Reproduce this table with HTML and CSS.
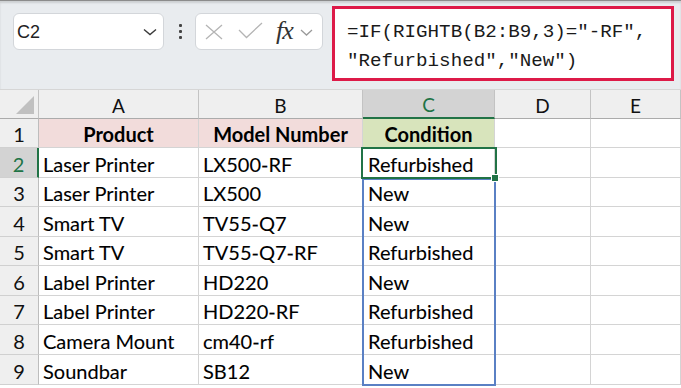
FILE: index.html
```html
<!DOCTYPE html>
<html>
<head>
<meta charset="utf-8">
<link rel="stylesheet" href="styles.css">
</head>
<body>
<div class="toolbar">
  <div class="namebox">
    <span class="name">C2</span>
    <svg class="chev" width="14" height="8" viewBox="0 0 14 8"><path d="M1 1.5 L7 6.5 L13 1.5" fill="none" stroke="#3a3a3a" stroke-width="1.4"/></svg>
  </div>
  <div class="dots"><i></i><i></i><i></i></div>
  <div class="fxbox">
    <svg class="xicon" width="18" height="16" viewBox="0 0 18 16"><path d="M1 1 L17 15 M17 1 L1 15" stroke="#b4b4b4" stroke-width="1.3" fill="none"/></svg>
    <svg class="check" width="25" height="17" viewBox="0 0 25 17"><path d="M1 8 L8.5 15.5 L24 1" stroke="#b4b4b4" stroke-width="1.3" fill="none"/></svg>
    <span class="fx">fx</span>
    <svg class="chev2" width="13" height="7" viewBox="0 0 13 7"><path d="M1 1 L6.5 6 L12 1" fill="none" stroke="#9a9a9a" stroke-width="1.3"/></svg>
  </div>
  <div class="formula">=IF(RIGHTB(B2:B9,3)="-RF",<br>"Refurbished","New")</div>
</div>
<div class="sheet">
  <div class="corner"><span class="tri"></span></div>
  <div class="ch">A</div><div class="ch">B</div><div class="ch sel">C</div><div class="ch">D</div><div class="ch">E</div>

  <div class="rh">1</div><div class="c hd pink">Product</div><div class="c hd pink">Model Number</div><div class="c hd green">Condition</div><div class="c"></div><div class="c"></div>
  <div class="rh sel">2</div><div class="c">Laser Printer</div><div class="c">LX500-RF</div><div class="c cc">Refurbished</div><div class="c"></div><div class="c"></div>
  <div class="rh">3</div><div class="c">Laser Printer</div><div class="c">LX500</div><div class="c cc">New</div><div class="c"></div><div class="c"></div>
  <div class="rh">4</div><div class="c">Smart TV</div><div class="c">TV55-Q7</div><div class="c cc">New</div><div class="c"></div><div class="c"></div>
  <div class="rh">5</div><div class="c">Smart TV</div><div class="c">TV55-Q7-RF</div><div class="c cc">Refurbished</div><div class="c"></div><div class="c"></div>
  <div class="rh">6</div><div class="c">Label Printer</div><div class="c">HD220</div><div class="c cc">New</div><div class="c"></div><div class="c"></div>
  <div class="rh">7</div><div class="c">Label Printer</div><div class="c">HD220-RF</div><div class="c cc">Refurbished</div><div class="c"></div><div class="c"></div>
  <div class="rh">8</div><div class="c">Camera Mount</div><div class="c">cm40-rf</div><div class="c cc">Refurbished</div><div class="c"></div><div class="c"></div>
  <div class="rh">9</div><div class="c">Soundbar</div><div class="c">SB12</div><div class="c cc">New</div><div class="c"></div><div class="c"></div>

  <div class="range"></div>
  <div class="active"></div>
  <div class="handle"></div>
</div>
</body>
</html>
```
FILE: styles.css
```css
* { box-sizing: border-box; }
html, body { margin: 0; padding: 0; background: #fff; }
body { width: 681px; height: 388px; overflow: hidden; font-family: "Lato", "Liberation Sans", sans-serif; color: #000; }

.toolbar {
  height: 90px;
  background: #e9ecef;
  display: flex;
  align-items: flex-start;
  padding-left: 13px;
  border-top: 1px solid #8c8c8c;
  box-shadow: inset 0 2px 2px rgba(0,0,0,0.12);
  border-bottom: 1px solid #d6d6d6;
}
.namebox {
  margin-top: 12px;
  width: 151px;
  height: 37px;
  background: #fff;
  border: 1px solid #d3d6da;
  border-radius: 6px;
  display: flex;
  align-items: center;
  justify-content: space-between;
  padding: 0 6px 0 3px;
}
.name { font-family: "Liberation Sans", sans-serif; font-size: 18px; color: #222; padding-top: 1px; }
.chev { margin-top: 1px; }
.dots {
  margin: 23px 0 0 15px;
  width: 3px;
  display: flex;
  flex-direction: column;
  gap: 3px;
}
.dots i { display: block; width: 3px; height: 3px; background: #444; border-radius: 1px; }
.fxbox {
  margin: 12px 0 0 13px;
  width: 128px;
  height: 37px;
  background: #fff;
  border: 1px solid #d3d6da;
  border-radius: 6px;
  display: flex;
  align-items: center;
  padding-left: 9px;
}
.xicon { margin-top: 1px; }
.check { margin-left: 15px; margin-top: -3px; }
.fx {
  margin-left: 13px;
  font-family: "Liberation Serif", "DejaVu Serif", serif;
  font-style: italic;
  font-size: 26px;
  color: #333;
  letter-spacing: -1px;
  margin-top: -2px;
}
.chev2 { margin-left: 7px; margin-top: 1px; }
.formula {
  margin: 5px 0 0 9px;
  width: 342px;
  height: 75px;
  background: #fff;
  border: 3px solid #dd1a48;
  font-family: "Liberation Mono", "DejaVu Sans Mono", monospace;
  font-size: 19.2px;
  line-height: 29px;
  color: #1a1a1a;
  padding: 9px 0 0 12px;
  white-space: nowrap;
}

.sheet {
  position: relative;
  display: grid;
  grid-template-columns: 39px 160px 164px 132px 96px 90px;
  grid-template-rows: 29px 29px 30px 29px 30px 29px 30px 29px 30px 30px;
}
.corner {
  background: #efefef;
  border-right: 1px solid #c3c3c3;
  border-bottom: 1px solid #ababab;
  position: relative;
}
.tri {
  position: absolute;
  right: 4px;
  bottom: 4px;
  width: 0; height: 0;
  border-left: 18px solid transparent;
  border-bottom: 18px solid #c0c0c0;
}
.ch {
  background: #efefef;
  border-right: 1px solid #c3c3c3;
  border-bottom: 1px solid #ababab;
  display: flex;
  align-items: center;
  justify-content: center;
  font-size: 19px;
  color: #111;
  padding-top: 2px;
}
.ch.sel { background: #d3d3d3; color: #217346; border-bottom: 2px solid #217346; }
.rh {
  background: #efefef;
  border-right: 1px solid #bdbdbd;
  border-bottom: 1px solid #d0d0d0;
  display: flex;
  align-items: center;
  justify-content: center;
  font-size: 20px;
  color: #111;
  padding-top: 2px;
}
.rh.sel { background: #d3d3d3; color: #217346; border-right: 2px solid #217346; }
.c {
  border-right: 1px solid #d4d4d4;
  border-bottom: 1px solid #d4d4d4;
  display: flex;
  align-items: center;
  padding: 2px 0 0 4px;
  font-size: 20px;
  white-space: nowrap;
  overflow: hidden;
  -webkit-text-stroke: 0.1px #000;
}
.c.cc { padding-left: 5px; }
.c.hd { justify-content: center; font-weight: 700; padding-left: 0; -webkit-text-stroke: 0; }
.c.pink { background: #f2dcdb; }
.c.green { background: #d8e4bc; }

.range {
  position: absolute;
  left: 362px;
  top: 88px;
  width: 134px;
  height: 208px;
  border: 2px solid #5a80c4;
}
.active {
  position: absolute;
  left: 361px;
  top: 57px;
  width: 136px;
  height: 32px;
  border: 2px solid #217346;
}
.handle {
  position: absolute;
  left: 491px;
  top: 84px;
  width: 8px;
  height: 8px;
  background: #217346;
  border: 1px solid #fff;
}
```
